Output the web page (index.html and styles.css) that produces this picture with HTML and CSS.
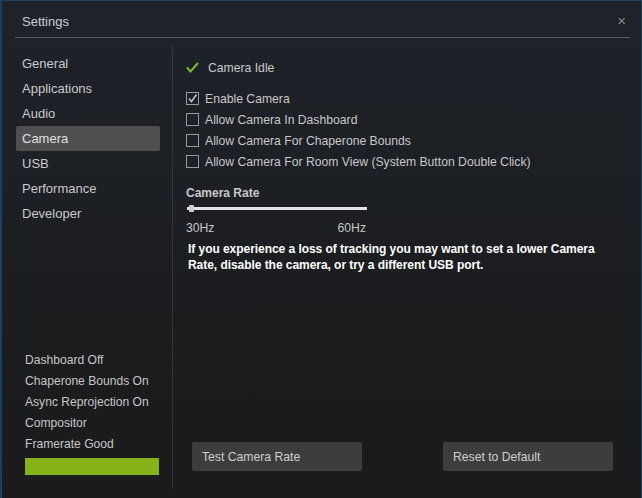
FILE: index.html
```html
<!DOCTYPE html>
<html>
<head>
<meta charset="utf-8">
<link rel="stylesheet" href="styles.css">
</head>
<body>
<div class="window">
  <div class="header">
    <span class="title">Settings</span>
    <span class="close">×</span>
  </div>
  <div class="main">
    <div class="sidebar">
      <nav class="nav">
        <div class="nav-item">General</div>
        <div class="nav-item">Applications</div>
        <div class="nav-item">Audio</div>
        <div class="nav-item active">Camera</div>
        <div class="nav-item">USB</div>
        <div class="nav-item">Performance</div>
        <div class="nav-item">Developer</div>
      </nav>
      <div class="status">
        <div class="status-line">Dashboard Off</div>
        <div class="status-line">Chaperone Bounds On</div>
        <div class="status-line">Async Reprojection On</div>
        <div class="status-line">Compositor</div>
        <div class="status-line">Framerate Good</div>
        <div class="status-bar"></div>
      </div>
    </div>
    <div class="content">
      <div class="idle">
        <svg class="idle-check" width="13" height="11" viewBox="0 0 13 11"><path d="M1 5.5 L4.5 9.5 L12 1" fill="none" stroke="#7cb82f" stroke-width="2"/></svg>
        <span>Camera Idle</span>
      </div>
      <div class="options">
        <label class="option"><span class="box checked"><svg width="11" height="11" viewBox="0 0 11 11"><path d="M2 5.5 L4.5 8.5 L9.5 1.5" fill="none" stroke="#c8c8c8" stroke-width="1.4"/></svg></span>Enable Camera</label>
        <label class="option"><span class="box"></span>Allow Camera In Dashboard</label>
        <label class="option"><span class="box"></span>Allow Camera For Chaperone Bounds</label>
        <label class="option"><span class="box"></span>Allow Camera For Room View (System Button Double Click)</label>
      </div>
      <div class="rate-title">Camera Rate</div>
      <div class="slider"><span class="thumb"></span></div>
      <div class="hz"><span>30Hz</span><span>60Hz</span></div>
      <p class="warning">If you experience a loss of tracking you may want to set a lower Camera Rate, disable the camera, or try a different USB port.</p>
      <div class="buttons">
        <button class="btn">Test Camera Rate</button>
        <button class="btn">Reset to Default</button>
      </div>
    </div>
  </div>
</div>
</body>
</html>
```
FILE: styles.css
```css
* { box-sizing: border-box; }
html, body { margin: 0; padding: 0; }
body {
  background: #1d3f60;
  width: 642px;
  height: 498px;
  overflow: hidden;
  font-family: "Liberation Sans", Arial, sans-serif;
  color: #c8c8c8;
}
.window {
  margin: 1px 1px 0 2px;
  height: 497px;
  background: linear-gradient(#1e232a, #1b1c1e 70%, #1b1b1c);
  padding: 0 11px 0 13px;
  display: flex;
  flex-direction: column;
}
.header {
  height: 37px;
  display: flex;
  align-items: center;
  justify-content: space-between;
  padding: 5px 4px 0 7px;
  border-bottom: 1px solid #5b5b5b;
  flex: none;
}
.title { font-size: 13px; color: #c9cdd1; }
.close { font-size: 15px; color: #8a8a8a; line-height: 1; margin-top: -2px; }
.main {
  flex: 1;
  display: flex;
  margin: 7px 0 9px;
  min-height: 0;
}
.sidebar {
  width: 158px;
  border-right: 1px solid #33363a;
  display: flex;
  flex-direction: column;
  justify-content: space-between;
  padding: 6px 0 14px 1px;
}
.nav { display: flex; flex-direction: column; }
.nav-item {
  width: 144px;
  height: 25px;
  line-height: 25px;
  padding-left: 6px;
  font-size: 13px;
  color: #cacaca;
  border-radius: 2px;
}
.nav-item.active { background: #4f4f4f; color: #e0e0e0; }
.status { padding-left: 9px; }
.status-line { font-size: 12.1px; height: 21px; line-height: 21px; color: #c6c6c6; }
.status-bar { margin-top: 3px; width: 134px; height: 17px; background: #86b31a; }
.content {
  flex: 1;
  display: flex;
  flex-direction: column;
  padding: 12px 17px 18px 13px;
  font-size: 12.2px;
}
.idle { display: flex; align-items: center; height: 21px; }
.idle-check { margin-right: 9px; }
.options { margin-top: 10px; display: flex; flex-direction: column; }
.option { display: flex; align-items: center; height: 21px; }
.box {
  width: 13px;
  height: 13px;
  border: 1px solid #9a9a9a;
  margin-right: 6px;
  display: flex;
  align-items: center;
  justify-content: center;
}
.rate-title { margin-top: 13px; font-size: 12px; font-weight: bold; color: #c8c8c8; height: 16px; line-height: 16px; }
.slider {
  position: relative;
  margin: 6px 0 0 1px;
  width: 180px;
  height: 3px;
  background: #e4e4e4;
}
.thumb {
  position: absolute;
  left: 2px;
  top: -2px;
  width: 5px;
  height: 7px;
  background: #d0d0d0;
  border-radius: 1px;
}
.hz { margin-top: 10px; width: 180px; display: flex; justify-content: space-between; height: 16px; line-height: 16px; }
.warning {
  margin: 5px 0 0 2px;
  font-size: 12px;
  font-weight: bold;
  color: #ffffff;
  line-height: 16px;
  width: 420px;
  letter-spacing: -0.05px;
}
.buttons { margin-top: auto; display: flex; justify-content: space-between; padding-left: 6px; }
.btn {
  width: 170px;
  height: 29px;
  background: #3d3d3d;
  border: none;
  border-radius: 2px;
  color: #cfcfcf;
  font-family: "Liberation Sans", Arial, sans-serif;
  font-size: 12.2px;
  text-align: left;
  padding: 0 0 0 10px;
}
```
